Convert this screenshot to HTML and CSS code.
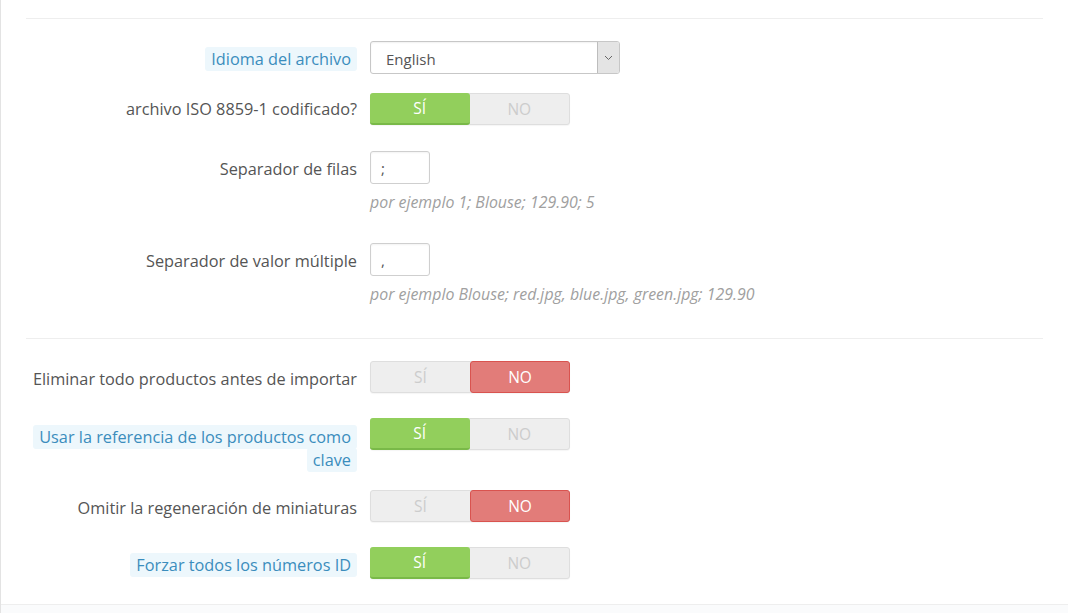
FILE: index.html
```html
<!DOCTYPE html>
<html lang="es">
<head>
<meta charset="utf-8">
<title>Importar</title>
<link rel="stylesheet" href="styles.css">
</head>
<body>
<div class="panel">
  <div class="panel-body">
    <hr class="sep sep-top">

    <div class="row row-select">
      <div class="label-col"><span class="tip">Idioma del archivo</span></div>
      <div class="ctrl">
        <div class="select">
          <span class="select-text">English</span>
          <span class="select-arrow">
            <svg width="9" height="6" viewBox="0 0 9 6"><path d="M1 1 L4.5 4.5 L8 1" fill="none" stroke="#666" stroke-width="1"/></svg>
          </span>
        </div>
      </div>
    </div>

    <div class="row row-toggle-a">
      <div class="label-col"><span class="plain">archivo ISO 8859-1 codificado?</span></div>
      <div class="ctrl">
        <div class="switch"><span class="opt yes on">SÍ</span><span class="opt">NO</span></div>
      </div>
    </div>

    <div class="row row-input">
      <div class="label-col"><span class="plain">Separador de filas</span></div>
      <div class="ctrl">
        <input class="small-input" type="text" value=";">
        <p class="help">por ejemplo 1; Blouse; 129.90; 5</p>
      </div>
    </div>

    <div class="row row-input last">
      <div class="label-col"><span class="plain">Separador de valor múltiple</span></div>
      <div class="ctrl">
        <input class="small-input" type="text" value=",">
        <p class="help">por ejemplo Blouse; red.jpg, blue.jpg, green.jpg; 129.90</p>
      </div>
    </div>

    <hr class="sep sep-mid">

    <div class="row row-toggle">
      <div class="label-col"><span class="plain">Eliminar todo productos antes de importar</span></div>
      <div class="ctrl">
        <div class="switch"><span class="opt">SÍ</span><span class="opt no on">NO</span></div>
      </div>
    </div>

    <div class="row row-toggle two-line">
      <div class="label-col"><span class="tip">Usar la referencia de los productos como clave</span></div>
      <div class="ctrl">
        <div class="switch"><span class="opt yes on">SÍ</span><span class="opt">NO</span></div>
      </div>
    </div>

    <div class="row row-toggle">
      <div class="label-col"><span class="plain">Omitir la regeneración de miniaturas</span></div>
      <div class="ctrl">
        <div class="switch"><span class="opt">SÍ</span><span class="opt no on">NO</span></div>
      </div>
    </div>

    <div class="row row-toggle">
      <div class="label-col"><span class="tip">Forzar todos los números ID</span></div>
      <div class="ctrl">
        <div class="switch"><span class="opt yes on">SÍ</span><span class="opt">NO</span></div>
      </div>
    </div>
  </div>
  <div class="panel-footer"></div>
</div>
</body>
</html>
```

FILE: styles.css
```css
html, body {
  margin: 0;
  padding: 0;
  background: #fff;
}

body {
  font-family: "Open Sans", "Liberation Sans", sans-serif;
  font-size: 16px;
  color: #555;
  height: 613px;
  overflow: hidden;
}

.panel {
  border-left: 1px solid #e3e3e3;
  height: 613px;
  display: flex;
  flex-direction: column;
}

.panel-body {
  padding: 18px 25px 0 25px;
  flex: 0 0 auto;
}

.sep {
  border: 0;
  border-top: 1px solid #eeeeee;
  margin: 0;
  height: 0;
}

.sep-top { margin-bottom: 22px; }
.sep-mid { margin-bottom: 22px; }

.row {
  display: flex;
  align-items: flex-start;
}

.label-col {
  width: 331px;
  flex: 0 0 331px;
  text-align: right;
  font-size: 16.3px;
  line-height: 23px;
  padding-top: 8px;
  margin-right: 13px;
}

.ctrl {
  flex: 1 1 auto;
}

.plain {
  color: #555;
}

.tip {
  color: #3b8dbd;
  background: #edf7fc;
  border-radius: 3px;
  padding: 1px 6px;
  -webkit-box-decoration-break: clone;
  box-decoration-break: clone;
}

/* select */
.row-select { margin-bottom: 19px; }
.row-select .label-col { padding-top: 7px; }

.select {
  width: 248px;
  height: 31px;
  border: 1px solid #c7c7c7;
  border-radius: 3px;
  display: flex;
  align-items: stretch;
  box-shadow: inset 0 1px 2px rgba(0,0,0,0.06);
  background: #fff;
  overflow: hidden;
}

.select-text {
  flex: 1 1 auto;
  padding-left: 15px;
  line-height: 34px;
  font-size: 15px;
  color: #555;
}

.select-arrow {
  width: 21px;
  background: #e4e4e4;
  border-left: 1px solid #bdbdbd;
  display: flex;
  align-items: center;
  justify-content: center;
}

/* switch */
.switch {
  width: 198px;
  height: 30px;
  border: 1px solid #dedede;
  border-radius: 3px;
  background: #eeeeee;
  display: flex;
  box-shadow: 0 1px 1px rgba(0,0,0,0.04);
}

.opt {
  width: 100px;
  text-align: center;
  line-height: 30px;
  font-size: 15.5px;
  color: #cccccc;
  box-sizing: border-box;
}

.opt.on {
  color: #fff;
  border-radius: 3px;
  margin: -1px;
  height: 32px;
  line-height: 31px;
}

.opt.yes.on {
  background: #92cf5c;
  border-bottom: 2px solid #79b948;
  margin-right: 0;
  width: 100px;
}

.opt.no.on {
  background: #e27c79;
  border: 1px solid #d9534f;
  margin-left: 0;
  width: 101px;
  line-height: 30px;
}

.row-toggle-a { margin-bottom: 26px; }
.row-toggle-a .label-col { padding-top: 5px; }

.row-toggle { margin-bottom: 25px; }
.row-toggle .label-col { padding-top: 7px; }
.row-toggle.two-line { margin-bottom: 18px; }
.row-toggle.two-line .label-col { padding-top: 8px; }

/* inputs */
.row-input { margin-bottom: 30px; }
.row-input.last { margin-bottom: 33px; }
.row-input .label-col { padding-top: 7px; }

.small-input {
  display: block;
  box-sizing: border-box;
  width: 60px;
  height: 33px;
  border: 1px solid #cfcfcf;
  border-radius: 3px;
  padding: 0 10px;
  font-family: "Open Sans", "Liberation Sans", sans-serif;
  font-size: 15px;
  color: #555;
  margin: 0;
  box-shadow: inset 0 1px 2px rgba(0,0,0,0.05);
}

.help {
  margin: 7px 0 0 0;
  font-size: 15.9px;
  font-style: italic;
  color: #a0a0a0;
  line-height: 22px;
}

.panel-footer {
  flex: 1 1 auto;
  border-top: 1px solid #eeeeee;
  background: #fafbfc;
}
```
